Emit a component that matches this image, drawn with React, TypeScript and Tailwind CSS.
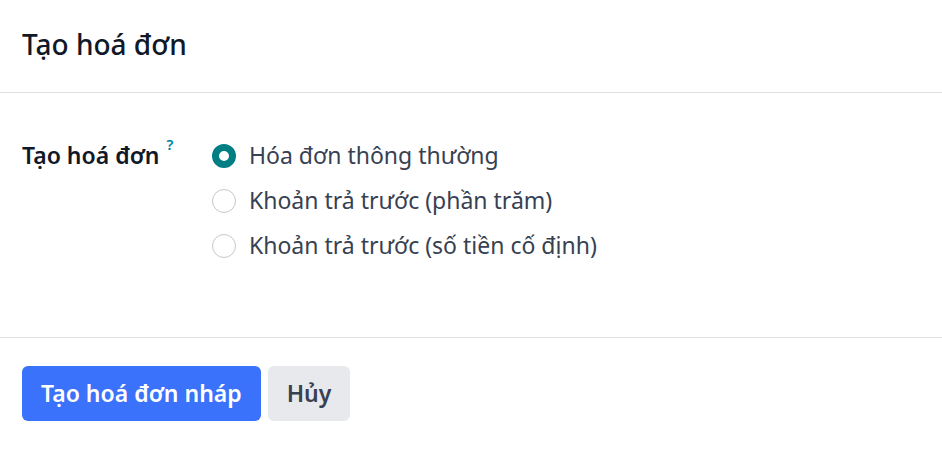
export default function App() {
  const options = [
    'Hóa đơn thông thường',
    'Khoản trả trước (phần trăm)',
    'Khoản trả trước (số tiền cố định)',
  ]
  return (
    <div className="w-[942px] h-[450px] bg-white font-['Noto_Sans',sans-serif] text-[#111827]">
      {/* Header */}
      <div className="h-[93px] border-b border-[#dee2e6] flex items-center px-[22px]">
        <h4 className="text-[28px] font-medium leading-none -mt-[5px]">Tạo hoá đơn</h4>
      </div>

      {/* Body */}
      <div className="h-[245px] border-b border-[#dee2e6] flex pl-[22px] pt-[40px]">
        <div className="w-[190px] shrink-0 flex items-start">
          <span className="text-[23px] font-semibold leading-[45px]">Tạo hoá đơn</span>
          <sup className="text-[15px] text-[#0180a5] font-semibold ml-[7px] mt-[18px]">?</sup>
        </div>
        <div className="flex flex-col">
          {options.map((o, i) => (
            <label key={o} className="flex items-center h-[45px] gap-[13px]">
              {i === 0 ? (
                <span className="w-[24px] h-[24px] rounded-full border-[7px] border-[#017e84] bg-white" />
              ) : (
                <span className="w-[24px] h-[24px] rounded-full border border-[#c4c8cc] bg-white" />
              )}
              <span className="text-[23px] text-[#374151]">{o}</span>
            </label>
          ))}
        </div>
      </div>

      {/* Footer */}
      <div className="flex gap-[7px] px-[22px] pt-[28px]">
        <button className="h-[55px] px-[19px] rounded-[6px] bg-[#3a72fb] text-white text-[23px] font-semibold">
          Tạo hoá đơn nháp
        </button>
        <button className="h-[55px] px-[19px] rounded-[6px] bg-[#e7e9ed] text-[#374151] text-[23px] font-semibold">
          Hủy
        </button>
      </div>
    </div>
  )
}
